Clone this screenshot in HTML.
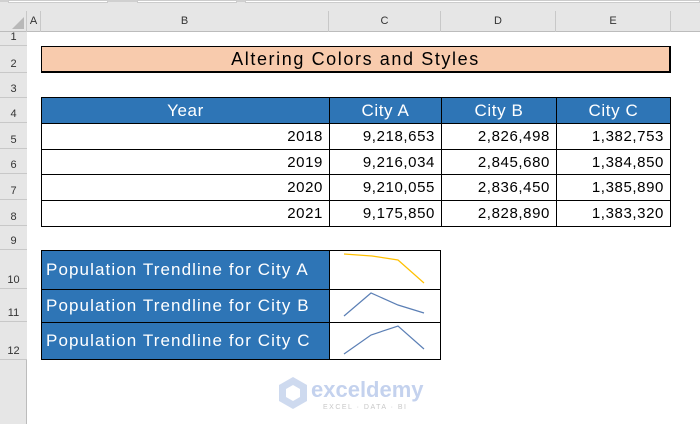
<!DOCTYPE html>
<html><head><style>
*{margin:0;padding:0;box-sizing:border-box}
body{width:700px;height:424px;background:#fff;position:relative;overflow:hidden;font-family:"Comic Sans MS","Liberation Sans",sans-serif}
.a{position:absolute}
.rh{position:absolute;left:0;width:27px;background:#e6e6e6;border-bottom:1px solid #c8c8c8;font-size:11px;color:#333;text-align:center;display:flex;align-items:flex-end;justify-content:center;padding-bottom:2px}
.ch{position:absolute;top:11px;height:21px;border-right:1px solid #c8c8c8;font-size:11px;color:#333;text-align:center;line-height:21px}
.c{position:absolute;border:1px solid #000;font-size:15px;display:flex;align-items:center;letter-spacing:0.6px}
.b{background:#2e75b6;color:#fff;justify-content:center}
.n{background:#fff;color:#000;justify-content:flex-end;padding-right:6px}
.p{justify-content:flex-start;padding-left:4px;font-size:17px;letter-spacing:1.1px}
</style></head><body>
<div class="a" style="left:0;top:0;width:700px;height:32px;background:#e6e6e6;border-bottom:1px solid #bcbcbc"></div>
<div class="a" style="left:0;top:0;width:700px;height:2px;background:#d0d0d0"></div>
<div class="a" style="left:8px;top:0;width:100px;height:3px;background:#fff;border:1px solid #ccc"></div>
<div class="a" style="left:137px;top:0;width:100px;height:3px;background:#fff;border:1px solid #ccc"></div>
<div class="a" style="left:245px;top:0;width:455px;height:3px;background:#fff;border:1px solid #ccc"></div>
<div class="ch" style="left:0;width:27px"></div>
<div class="a" style="left:12px;top:17px;width:0;height:0;border-left:12px solid transparent;border-bottom:12px solid #b8b8b8"></div>
<div class="ch" style="left:27px;width:14px">A</div>
<div class="ch" style="left:41px;width:288px">B</div>
<div class="ch" style="left:329px;width:112px">C</div>
<div class="ch" style="left:441px;width:115px">D</div>
<div class="ch" style="left:556px;width:115px">E</div>
<div class="a" style="left:0;top:32px;width:27px;height:392px;background:#e6e6e6;border-right:1px solid #bcbcbc"></div>
<div class="rh" style="top:32px;height:14px">1</div>
<div class="rh" style="top:46px;height:27px">2</div>
<div class="rh" style="top:73px;height:25px">3</div>
<div class="rh" style="top:98px;height:25px">4</div>
<div class="rh" style="top:123px;height:26px">5</div>
<div class="rh" style="top:149px;height:25px">6</div>
<div class="rh" style="top:174px;height:26px">7</div>
<div class="rh" style="top:200px;height:26px">8</div>
<div class="rh" style="top:226px;height:24px">9</div>
<div class="rh" style="top:250px;height:39px">10</div>
<div class="rh" style="top:289px;height:33px">11</div>
<div class="rh" style="top:322px;height:38px">12</div>

<div class="c" style="left:41px;top:46px;width:630px;height:27px;background:#f8cbad;justify-content:center;font-size:18px;letter-spacing:1.6px;border-width:1px 2px 2px 1px">Altering Colors and Styles</div>

<div class="c b" style="left:41px;top:97px;width:289px;height:27px;font-size:17px">Year</div>
<div class="c b" style="left:329px;top:97px;width:113px;height:27px;font-size:17px">City A</div>
<div class="c b" style="left:441px;top:97px;width:116px;height:27px;font-size:17px">City B</div>
<div class="c b" style="left:556px;top:97px;width:115px;height:27px;font-size:17px">City C</div>

<div class="c n" style="left:41px;top:123px;width:289px;height:27px">2018</div>
<div class="c n" style="left:329px;top:123px;width:113px;height:27px">9,218,653</div>
<div class="c n" style="left:441px;top:123px;width:116px;height:27px">2,826,498</div>
<div class="c n" style="left:556px;top:123px;width:115px;height:27px">1,382,753</div>
<div class="c n" style="left:41px;top:149px;width:289px;height:26px">2019</div>
<div class="c n" style="left:329px;top:149px;width:113px;height:26px">9,216,034</div>
<div class="c n" style="left:441px;top:149px;width:116px;height:26px">2,845,680</div>
<div class="c n" style="left:556px;top:149px;width:115px;height:26px">1,384,850</div>
<div class="c n" style="left:41px;top:174px;width:289px;height:27px">2020</div>
<div class="c n" style="left:329px;top:174px;width:113px;height:27px">9,210,055</div>
<div class="c n" style="left:441px;top:174px;width:116px;height:27px">2,836,450</div>
<div class="c n" style="left:556px;top:174px;width:115px;height:27px">1,385,890</div>
<div class="c n" style="left:41px;top:200px;width:289px;height:27px">2021</div>
<div class="c n" style="left:329px;top:200px;width:113px;height:27px">9,175,850</div>
<div class="c n" style="left:441px;top:200px;width:116px;height:27px">2,828,890</div>
<div class="c n" style="left:556px;top:200px;width:115px;height:27px">1,383,320</div>

<div class="c b p" style="left:41px;top:250px;width:289px;height:40px">Population Trendline for City A</div>
<div class="c b p" style="left:41px;top:289px;width:289px;height:34px">Population Trendline for City B</div>
<div class="c b p" style="left:41px;top:322px;width:289px;height:38px">Population Trendline for City C</div>
<div class="c" style="left:329px;top:250px;width:112px;height:40px;background:#fff"></div>
<div class="c" style="left:329px;top:289px;width:112px;height:34px;background:#fff"></div>
<div class="c" style="left:329px;top:322px;width:112px;height:38px;background:#fff"></div>
<svg class="a" style="left:0;top:0" width="700" height="424">
<polyline points="344,254 372,256 398,260 424,283" fill="none" stroke="#ffc000" stroke-width="1.2"/>
<polyline points="344,316 371,293 398,305 424,313" fill="none" stroke="#5b7fb5" stroke-width="1.2"/>
<polyline points="344,354 371,335 398,326 424,349" fill="none" stroke="#5b7fb5" stroke-width="1.2"/>
<g opacity="0.5">
<polygon points="293,377 307,385 307,401 293,409 279,401 279,385" fill="#9fb6e0"/>
<polygon points="293,385 300,389 300,397 293,401 286,397 286,389" fill="#fff"/>
</g>
<text x="311" y="397" font-family="Liberation Sans,sans-serif" font-size="22" font-weight="bold" fill="#c4d2ee">exceldemy</text>
<text x="323" y="409" font-family="Liberation Sans,sans-serif" font-size="7" fill="#c8c8c8" letter-spacing="1.5">EXCEL · DATA · BI</text>
</svg>
</body></html>
